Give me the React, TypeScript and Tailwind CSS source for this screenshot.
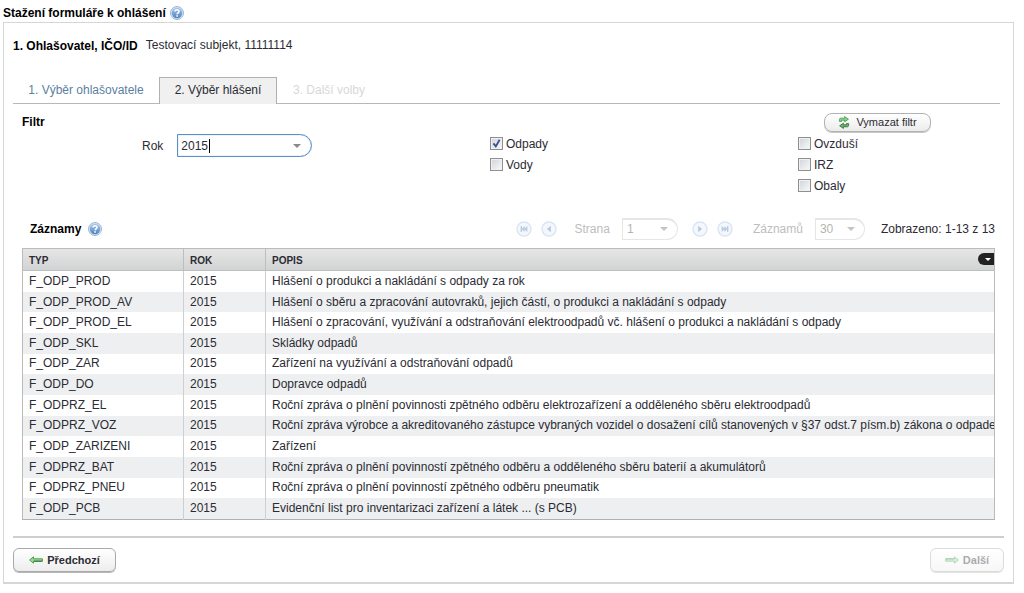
import React, { useId, useState } from "react";

const rows: string[][] = [
  ["F_ODP_PROD", "Hlášení o produkci a nakládání s odpady za rok"],
  ["F_ODP_PROD_AV", "Hlášení o sběru a zpracování autovraků, jejich částí, o produkci a nakládání s odpady"],
  ["F_ODP_PROD_EL", "Hlášení o zpracování, využívání a odstraňování elektroodpadů vč. hlášení o produkci a nakládání s odpady"],
  ["F_ODP_SKL", "Skládky odpadů"],
  ["F_ODP_ZAR", "Zařízení na využívání a odstraňování odpadů"],
  ["F_ODP_DO", "Dopravce odpadů"],
  ["F_ODPRZ_EL", "Roční zpráva o plnění povinnosti zpětného odběru elektrozařízení a odděleného sběru elektroodpadů"],
  ["F_ODPRZ_VOZ", "Roční zpráva výrobce a akreditovaného zástupce vybraných vozidel o dosažení cílů stanovených v §37 odst.7 písm.b) zákona o odpade"],
  ["F_ODP_ZARIZENI", "Zařízení"],
  ["F_ODPRZ_BAT", "Roční zpráva o plnění povinností zpětného odběru a odděleného sběru baterií a akumulátorů"],
  ["F_ODPRZ_PNEU", "Roční zpráva o plnění povinností zpětného odběru pneumatik"],
  ["F_ODP_PCB", "Evidenční list pro inventarizaci zařízení a látek ... (s PCB)"],
];

function HelpIcon() {
  const id = useId();
  return (
    <svg width="14" height="14" viewBox="0 0 14 14" aria-hidden="true">
      <defs>
        <linearGradient id={id} x1="0" y1="0" x2="0" y2="1">
          <stop offset="0" stopColor="#a9c8ea" />
          <stop offset="1" stopColor="#4f82c0" />
        </linearGradient>
      </defs>
      <circle cx="7" cy="7" r="6.5" fill="#d3e1f1" stroke="#9db7d6" />
      <circle cx="7" cy="7" r="5.2" fill={`url(#${id})`} />
      <path d="M5 5.6C5 3.2 9 3.2 9 5.4C9 6.8 7.1 6.8 7.1 8.3" fill="none" stroke="#fff" strokeWidth="1.5" />
      <rect x="6.3" y="9.2" width="1.6" height="1.5" fill="#fff" />
    </svg>
  );
}

function Caret({ className }: { className: string }) {
  return (
    <svg className={className} width="8" height="4" viewBox="0 0 8 4" aria-hidden="true">
      <path d="M0 0H8L4 4Z" fill="currentColor" />
    </svg>
  );
}

function Arrow({ flip = false }: { flip?: boolean }) {
  return (
    <svg width="14" height="8" viewBox="0 0 14 8" className={flip ? "rotate-180" : ""} aria-hidden="true">
      <path d="M.6 4L4.5.8V2.8H13.4V5.2H4.5V7.2Z" fill="#9ada92" stroke="#3f9a45" strokeWidth=".9" />
      <path d="M5 5.2H13.4" stroke="#2d6b38" strokeWidth=".9" />
    </svg>
  );
}

function RefreshIcon() {
  return (
    <svg width="12" height="13" viewBox="0 0 12 13" aria-hidden="true">
      <path d="M1.4 5.4V3.6C1.4 2.6 2 2.2 3 2.2H6.6V.6L10.4 3.2L6.6 5.8V4.2H3.6V5.4Z" fill="#8ed08a" stroke="#3f9a45" strokeWidth=".8" />
      <path d="M10.6 7.6V9.4C10.6 10.4 10 10.8 9 10.8H5.4V12.4L1.6 9.8L5.4 7.2V8.8H8.4V7.6Z" fill="#6db56b" stroke="#2f6b3a" strokeWidth=".8" />
    </svg>
  );
}

function PageButton({ label, flip = false, end = false }: { label: string; flip?: boolean; end?: boolean }) {
  return (
    <button type="button" disabled aria-label={label} className="flex size-4 items-center justify-center">
      <svg width="16" height="16" viewBox="0 0 16 16" className={flip ? "rotate-180" : ""} aria-hidden="true">
        <circle cx="8" cy="8" r="7" fill="#f4f8fc" stroke="#dbe5f1" strokeWidth="1.4" />
        {end ? (
          <path d="M4.6 5H6V7.4L8.6 5V7.4L11.4 5V11L8.6 8.6V11L6 8.6V11H4.6Z" fill="#b9cce4" />
        ) : (
          <path d="M9.8 4.8V11.2L6 8Z" fill="#b3c8e2" />
        )}
      </svg>
    </button>
  );
}

function PageSelect({ label, value, width }: { label: string; value: string; width: string }) {
  return (
    <label className="flex items-center gap-3">
      {label}
      <span className="relative flex items-center">
        <select
          disabled
          defaultValue={value}
          className={`${width} h-[22px] appearance-none rounded-r-full border border-t-2 border-[#e6e6e6] bg-white pb-0.5 pl-1 text-[#b4b4b4]`}
        >
          <option>{value}</option>
        </select>
        <Caret className="pointer-events-none absolute right-2.5 text-[#c4c4c4]" />
      </span>
    </label>
  );
}

function Check({ label, initial = false }: { label: string; initial?: boolean }) {
  const [on, setOn] = useState(initial);
  return (
    <label className="flex h-[21px] items-center gap-[3px]">
      <span className="relative flex size-[13px]">
        <input
          type="checkbox"
          checked={on}
          onChange={() => setOn(!on)}
          className="size-[13px] appearance-none border border-[#8e8f8f] bg-linear-to-br from-[#cfd3d8] to-[#fafafa] shadow-[inset_0_0_0_1px_#f0f0f0]"
        />
        {on && (
          <svg className="pointer-events-none absolute inset-0" width="13" height="13" viewBox="0 0 13 13" aria-hidden="true">
            <path d="M3.4 6.4L5.8 9.4L9.6 2.8" fill="none" stroke="#3a4f9a" strokeWidth="1.8" />
          </svg>
        )}
      </span>
      {label}
    </label>
  );
}

export default function App() {
  const [year, setYear] = useState("2015");
  return (
    <main className="bg-white pr-2.5 pb-2.5 pl-[3px] font-['Liberation_Sans',Arial,sans-serif] text-xs text-[#2b2b33]">
      <h1 className="flex h-[22px] items-center gap-1 pt-1 font-bold text-black">
        Stažení formuláře k ohlášení <HelpIcon />
      </h1>
      <section className="border border-b-2 border-[#d6d6d6] px-[9px] pb-2.5">
        <div className="flex h-[54px] items-center gap-2 pb-2">
          <h2 className="font-bold text-black">1. Ohlašovatel, IČO/ID</h2>
          <p className="pb-0.5">Testovací subjekt, 11111114</p>
        </div>

        <nav className="mr-1 flex h-[27px] border-b border-[#b8b8b8]">
          <a href="#ohlasovatel" className="flex w-[146px] items-center justify-center text-[#5b7f9f]">1. Výběr ohlašovatele</a>
          <a href="#hlaseni" aria-current="step" className="-mb-px flex w-[118px] items-center justify-center border border-b-0 border-[#b0b0b0] bg-[#f0f0f0] pb-0.5">2. Výběr hlášení</a>
          <a href="#volby" aria-disabled="true" className="flex items-center pl-4 text-[#d8d8d8]">3. Další volby</a>
        </nav>

        <div className="mx-[9px]">
          <div className="flex h-[29px] items-center justify-between pt-[7px]">
            <h3 className="font-bold text-black">Filtr</h3>
            <button type="button" className="mr-16 flex h-[19px] w-[107px] items-center justify-center gap-1.5 rounded-lg border border-[#b2b2b2] bg-linear-to-b from-white to-[#ececec] text-[11px] shadow-[0_1px_0_#c8c8c8]">
              <RefreshIcon /> Vymazat filtr
            </button>
          </div>
          <div className="flex h-[77px] items-start">
            <div className="flex flex-1 items-center gap-3.5 pt-px pl-[120px]">
              <label htmlFor="year">Rok</label>
              <div className="flex h-[23px] w-[135px] items-center rounded-r-full border border-[#5b8fc7] bg-white pr-2.5 pl-[3px] shadow-[inset_0_0_1px_#5b8fc7]">
                <input id="year" value={year} onChange={(e) => setYear(e.target.value)} className="w-7 outline-none" />
                <span className="h-3.5 w-px bg-black" />
                <Caret className="ml-auto text-[#8a8a8a]" />
              </div>
            </div>
            <fieldset className="w-[308px]">
              <Check label="Odpady" initial />
              <Check label="Vody" />
            </fieldset>
            <fieldset className="w-[197px]">
              <Check label="Ovzduší" />
              <Check label="IRZ" />
              <Check label="Obaly" />
            </fieldset>
          </div>

          <div className="flex h-[38px] items-center">
            <h3 className="flex items-center gap-[7px] pl-2 font-bold text-black">
              Záznamy <HelpIcon />
            </h3>
            <div className="ml-auto flex items-center text-[#bdbdbd]">
              <div className="mr-[18px] flex gap-[9px]">
                <PageButton label="První strana" end />
                <PageButton label="Předchozí strana" />
              </div>
              <PageSelect label="Strana" value="1" width="w-[56px]" />
              <div className="mr-5 ml-[14px] flex gap-[9px]">
                <PageButton label="Další strana" flip />
                <PageButton label="Poslední strana" end flip />
              </div>
              <PageSelect label="Záznamů" value="30" width="w-[50px]" />
              <p className="ml-4 text-[#2b2b33]">Zobrazeno: 1-13 z 13</p>
            </div>
          </div>

          <table className="h-[272px] w-full table-fixed border-collapse border border-[#b9bdb9] border-b-[#b0b0b0]">
            <thead>
              <tr className="h-[22px] border-b border-[#bdc1bd] bg-linear-to-b from-[#e6e6e6] to-[#d2d3d4] text-left text-[10px]">
                <th className="w-[161px] border-r border-[#bbbfbb] px-1.5 pt-0.5 pb-0">TYP</th>
                <th className="w-[82px] border-r border-[#bbbfbb] px-1.5 pt-0.5 pb-0">ROK</th>
                <th className="py-0 pl-1.5">
                  <div className="flex items-center justify-between">
                    <span className="pt-0.5">POPIS</span>
                    <button type="button" aria-label="Sloupce" className="flex h-3 w-4 items-center justify-center rounded-l-md bg-[#222] pl-1 text-white">
                      <svg width="6" height="3" viewBox="0 0 6 3" aria-hidden="true">
                        <path d="M0 0H6L3 3Z" fill="currentColor" />
                      </svg>
                    </button>
                  </div>
                </th>
              </tr>
            </thead>
            <tbody>
              {rows.map(([type, text]) => (
                <tr key={type} className="even:bg-[#eeeff0]">
                  <td className="border-r border-[#cfcfcf] px-1.5 pt-0 pb-px">{type}</td>
                  <td className="border-r border-[#cfcfcf] px-1.5 pt-0 pb-px">2015</td>
                  <td className="pt-0 pr-0 pb-px pl-1.5">
                    <div className="overflow-hidden whitespace-nowrap">{text}</div>
                  </td>
                </tr>
              ))}
            </tbody>
          </table>
        </div>

        <footer className="mt-4 flex justify-between border-t-2 border-[#cecece] pt-2.5">
          <button type="button" className="flex h-6 w-[103px] items-center justify-center gap-1 rounded-md border border-[#a9a9a9] bg-linear-to-b from-white to-[#ededed] text-[11px] font-bold shadow-[0_1px_0_#b8b8b8]">
            <Arrow /> Předchozí
          </button>
          <button type="button" disabled className="flex h-6 w-[74px] items-center justify-center gap-1 rounded-md border border-[#a9a9a9] bg-linear-to-b from-white to-[#ededed] text-[11px] font-bold opacity-40 shadow-[0_1px_0_#b8b8b8]">
            <Arrow flip /> Další
          </button>
        </footer>
      </section>
    </main>
  );
}
